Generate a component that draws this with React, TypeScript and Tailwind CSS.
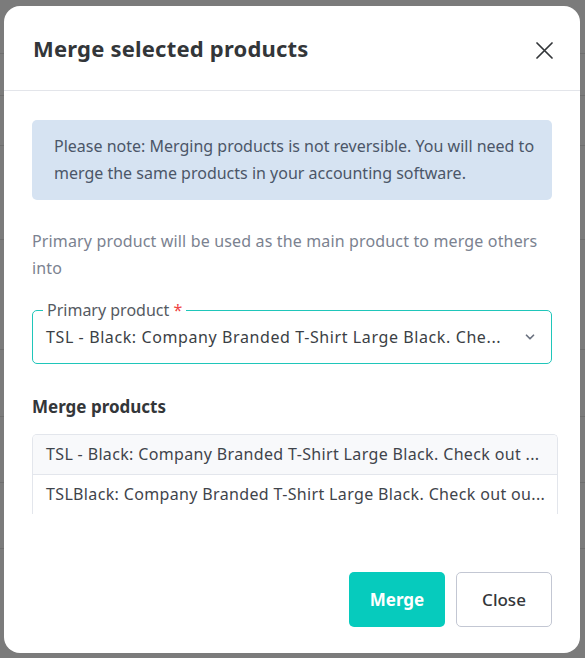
import { ChevronDown } from "lucide-react";

const rows = [
  "TSL - Black: Company Branded T-Shirt Large Black. Check out ...",
  "TSLBlack: Company Branded T-Shirt Large Black. Check out ou...",
];

export default function App() {
  return (
    <div
      className="relative h-[658px] w-[585px] overflow-hidden bg-[#7b7b7b]"
      style={{ fontFamily: '"Noto Sans", "Open Sans", sans-serif' }}
    >
      {/* faint page behind the overlay */}
      <div className="absolute inset-0 flex flex-col">
        <div className="h-[54px] border-b border-[#6e6e6e]" />
        <div className="h-[42px] border-b border-[#6e6e6e]" />
        <div className="h-[50px] border-b border-[#6e6e6e]" />
        <div className="h-[94px] border-b border-[#6e6e6e]" />
        <div className="h-[110px] border-b border-[#6e6e6e]" />
        <div className="h-[67px] border-b border-[#6e6e6e]" />
        <div className="h-[66px] border-b border-[#6e6e6e]" />
        <div className="h-[66px] border-b border-[#6e6e6e]" />
      </div>

      <div className="relative ml-[4px] mt-[6px] flex h-[647px] w-[576px] flex-col rounded-[16px] bg-white">
        <div className="flex h-[85px] items-center justify-between border-b border-[#e3e5ea] pl-[29px] pr-[27px]">
          <h2 className="text-[22px] font-bold tracking-[0.2px] text-[#333639]">Merge selected products</h2>
          <button className="mt-[5px] text-[#333639]">
            <svg width="17" height="17" viewBox="0 0 17 17" fill="none" stroke="currentColor" strokeWidth="1.7" strokeLinecap="round">
              <path d="M1 1L16 16M16 1L1 16" />
            </svg>
          </button>
        </div>

        <div className="flex flex-1 flex-col px-[28px] pt-[29px]">
          <div className="rounded-[5px] bg-[#d6e3f2] py-[13px] pl-[22px] pr-[12px] text-[16px] leading-[27px] text-[#4b5668]">
            Please note: Merging products is not reversible. You will need to merge the same products in your
            accounting software.
          </div>

          <p className="mt-[28px] text-[16px] leading-[27px] tracking-[0.15px] text-[#7b8290]">
            Primary product will be used as the main product to merge others into
          </p>

          <div className="relative mt-[28px] flex h-[54px] w-[520px] items-center justify-between rounded-[5px] border border-[#1fc6ba] pl-[13px] pr-[14px]">
            <span className="absolute -top-[11px] left-[10px] bg-white px-[4px] text-[16px] leading-[20px] text-[#555a62]">
              Primary product <span className="text-[#ef4444]">*</span>
            </span>
            <span className="whitespace-nowrap text-[16px] tracking-[0.6px] text-[#3b3f45]">
              TSL - Black: Company Branded T-Shirt Large Black. Che...
            </span>
            <ChevronDown size={14} strokeWidth={3} className="text-[#6b7280]" />
          </div>

          <h3 className="mt-[30px] text-[17px] font-bold text-[#333639]">Merge products</h3>

          <div className="mt-[14px] h-[80px] w-[526px] overflow-hidden rounded-t-[5px] border border-b-0 border-[#e3e6ec]">
            {rows.map((r, i) => (
              <div
                key={i}
                className={`flex h-[40px] items-center border-b border-[#e3e6ec] px-[13px] text-[16px] tracking-[0.35px] text-[#3f444b] ${
                  i === 0 ? "bg-[#f8f9fb]" : "bg-white"
                }`}
              >
                <span className="whitespace-nowrap">{r}</span>
              </div>
            ))}
          </div>

          <div className="mt-auto mb-[26px] flex justify-end gap-[11px]">
            <button className="h-[55px] w-[96px] rounded-[5px] bg-[#06cbbd] text-[17px] font-bold text-white">
              Merge
            </button>
            <button className="h-[55px] w-[96px] rounded-[5px] border border-[#c3c7d3] bg-white text-[17px] font-medium text-[#333639]">
              Close
            </button>
          </div>
        </div>
      </div>
    </div>
  );
}
